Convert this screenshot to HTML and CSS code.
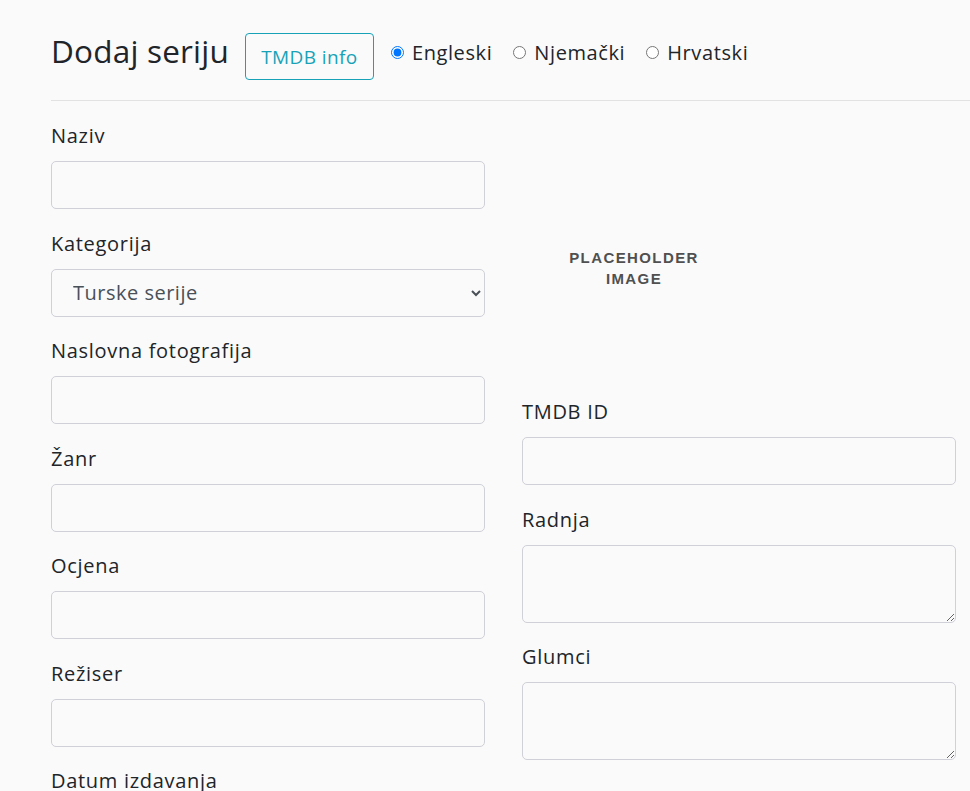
FILE: index.html
```html
<!DOCTYPE html>
<html lang="hr">
<head>
<meta charset="utf-8">
<title>Dodaj seriju</title>
<link rel="stylesheet" href="styles.css">
</head>
<body>
<main class="page">
  <header class="page-header">
    <h1 class="title">Dodaj seriju</h1>
    <button class="btn-info" type="button">TMDB info</button>
    <div class="langs">
      <label class="lang"><input type="radio" name="lang" checked> Engleski</label>
      <label class="lang"><input type="radio" name="lang"> Njemački</label>
      <label class="lang"><input type="radio" name="lang"> Hrvatski</label>
    </div>
  </header>
  <form class="form-grid">
    <div class="col">
      <div class="group">
        <label class="lbl">Naziv</label>
        <input class="ctl" type="text">
      </div>
      <div class="group">
        <label class="lbl">Kategorija</label>
        <select class="ctl sel">
          <option>Turske serije</option>
        </select>
      </div>
      <div class="group">
        <label class="lbl">Naslovna fotografija</label>
        <input class="ctl" type="text">
      </div>
      <div class="group">
        <label class="lbl">Žanr</label>
        <input class="ctl" type="text">
      </div>
      <div class="group">
        <label class="lbl">Ocjena</label>
        <input class="ctl" type="text">
      </div>
      <div class="group">
        <label class="lbl">Režiser</label>
        <input class="ctl" type="text">
      </div>
      <div class="group">
        <label class="lbl">Datum izdavanja</label>
        <input class="ctl" type="text">
      </div>
    </div>
    <div class="col">
      <div class="placeholder">
        <span>PLACEHOLDER<br>IMAGE</span>
      </div>
      <div class="group">
        <label class="lbl">TMDB ID</label>
        <input class="ctl" type="text">
      </div>
      <div class="group">
        <label class="lbl">Radnja</label>
        <textarea class="ctl area"></textarea>
      </div>
      <div class="group">
        <label class="lbl">Glumci</label>
        <textarea class="ctl area"></textarea>
      </div>
    </div>
  </form>
</main>
</body>
</html>
```
FILE: styles.css
```css
html, body {
  margin: 0;
  padding: 0;
  background: #fafafa;
}
body {
  font-family: "Open Sans", "Noto Sans", sans-serif;
  color: #212529;
  overflow: hidden;
}
.page {
  padding-left: 51px;
}
.page-header {
  display: flex;
  align-items: center;
  padding-top: 33px;
  padding-bottom: 20px;
  border-bottom: 1px solid #e2e2e2;
}
.title {
  margin: -6px 0 6px 0;
  font-size: 31.5px;
  font-weight: 500;
  line-height: 36px;
  color: #212529;
  letter-spacing: 0.2px;
}
.btn-info {
  margin-left: 16px;
  height: 47px;
  width: 129px;
  padding: 0;
  background: transparent;
  border: 1px solid #17a2b8;
  border-radius: 4px;
  color: #17a2b8;
  font-family: inherit;
  font-size: 19px;
  letter-spacing: 0.4px;
}
.langs {
  display: flex;
  align-items: center;
  margin: -4px 0 4px 17px;
  gap: 21px;
}
.lang {
  display: flex;
  align-items: center;
  gap: 8px;
  font-size: 20px;
  letter-spacing: 0.6px;
  color: #212529;
}
.lang input {
  margin: 0;
  width: 13px;
  height: 13px;
}
.form-grid {
  display: grid;
  grid-template-columns: 434px 434px;
  column-gap: 37px;
  padding-top: 20px;
  align-items: start;
}
.group {
  display: flex;
  flex-direction: column;
  margin-bottom: 19.5px;
}
.lbl {
  font-size: 20px;
  letter-spacing: 0.7px;
  line-height: 30px;
  margin-bottom: 10px;
  color: #212529;
}
.ctl {
  box-sizing: border-box;
  height: 48px;
  width: 100%;
  margin: 0;
  border: 1px solid #cfd0d8;
  border-radius: 5px;
  background: #fafafa;
  font-family: inherit;
  font-size: 20px;
  letter-spacing: 0.5px;
  color: #495057;
}
.sel {
  padding-left: 17px;
  padding-right: 12px;
}
.area {
  height: 78px;
  resize: vertical;
}
.placeholder {
  width: 224px;
  height: 256px;
  margin-bottom: 20px;
  display: flex;
  justify-content: center;
  padding-top: 126px;
  box-sizing: border-box;
  text-align: center;
}
.placeholder span {
  font-family: "Liberation Sans", Arial, sans-serif;
  font-weight: 700;
  font-size: 15px;
  line-height: 21px;
  letter-spacing: 1.4px;
  color: #505050;
}
```
